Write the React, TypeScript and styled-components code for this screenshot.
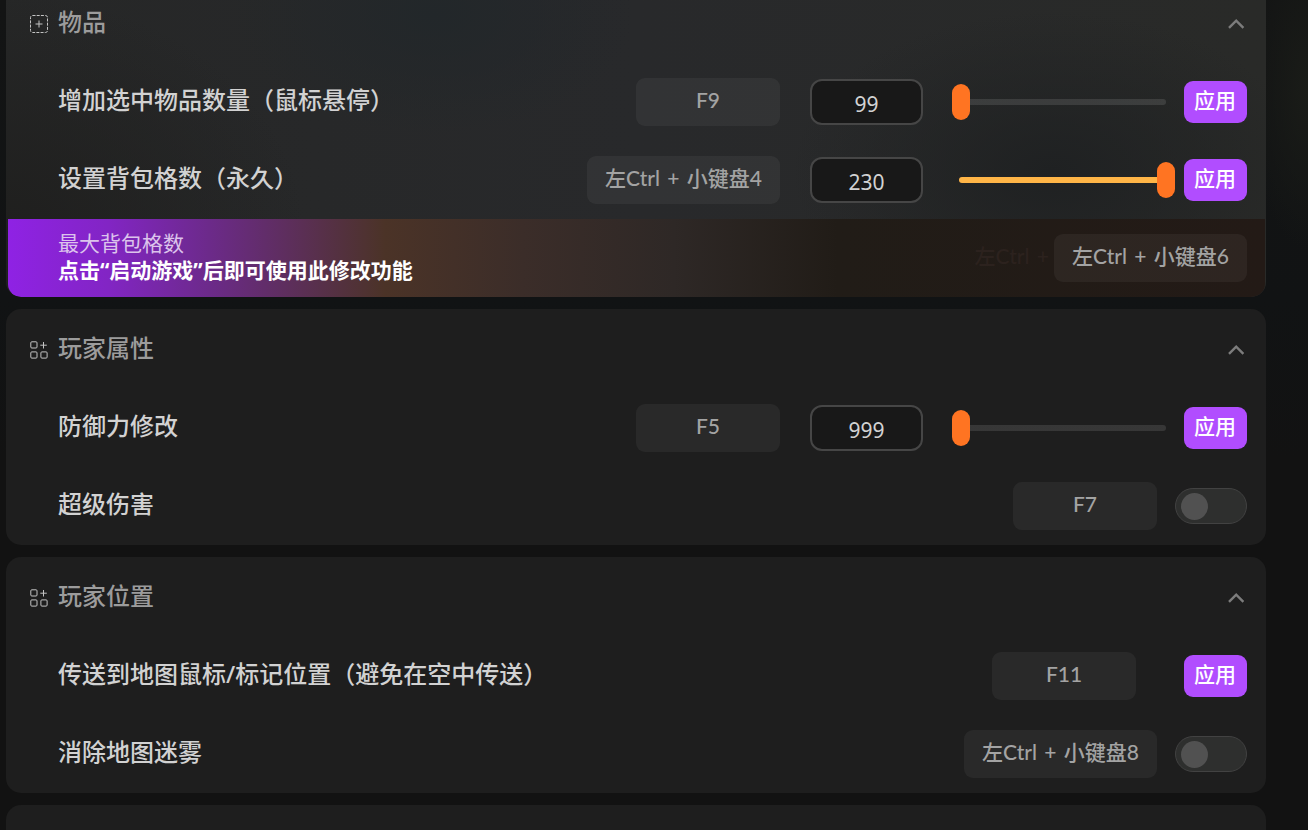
import React, { useId, useState } from 'react';
import styled, { createGlobalStyle } from 'styled-components';

const GlobalStyle = createGlobalStyle`
  *, *::before, *::after { box-sizing: border-box; }
  body {
    margin: 0;
    background: #121212;
    font-family: 'Noto Sans', 'Noto Sans CJK SC', sans-serif;
    color: #d2d2d2;
  }
  button, input { font: inherit; color: inherit; }
`;

const Page = styled.main`
  height: 100vh;
  overflow: hidden;
  padding: 0 42px 0 6px;
  background:
    radial-gradient(ellipse 60px 160px at 100% 90px, #1a1c18 0%, transparent 100%),
    linear-gradient(180deg, #131414 0, #111314 300px, #121212 460px);
`;

const List = styled.div`
  display: flex;
  flex-direction: column;
  gap: 12px;
  margin-top: -17px;
`;

const Card = styled.section<{ $lit?: boolean }>`
  flex: none;
  border-radius: 15px;
  overflow: hidden;
  background: ${({ $lit }) =>
    $lit
      ? `radial-gradient(ellipse 260px 160px at 83% 60%, #1f2122 0%, transparent 100%),
         radial-gradient(ellipse 300px 240px at 0% 80%, #1f1f1e 0%, transparent 100%),
         radial-gradient(ellipse 200px 120px at 34% 10%, #22272a 0%, transparent 100%),
         linear-gradient(90deg, #262727 0%, #28292b 50%, #292a28 100%)`
      : '#1e1e1e'};
`;

const Header = styled.header`
  display: flex;
  align-items: center;
  gap: 10px;
  height: 80px;
  padding: 1px 21px 0 24px;
`;

const HeaderIcon = styled.svg`
  flex: none;
  width: 18px;
  height: 18px;
  fill: none;
  stroke: #c4c4c4;
`;

const Title = styled.h2`
  flex: 1;
  margin: 0 0 3px;
  font-size: 24px;
  line-height: 36px;
  font-weight: 500;
  color: #9c9c9c;
`;

const Collapse = styled.button`
  display: flex;
  padding: 0;
  border: 0;
  background: none;
  color: #7c7c7c;
  cursor: pointer;
`;

const Row = styled.div`
  display: flex;
  align-items: center;
  height: 78px;
  padding: 0 19px 0 52px;
`;

const Label = styled.label`
  flex: 1;
  margin-bottom: 4px;
  font-size: 24px;
  line-height: 36px;
  font-weight: 500;
`;

const Controls = styled.div<{ $gap: number }>`
  display: flex;
  align-items: center;
  gap: ${({ $gap }) => $gap}px;
`;

const HotkeyButton = styled.button`
  min-width: 144px;
  height: 48px;
  padding: 0 18px 4px;
  border: 0;
  border-radius: 9px;
  background: rgba(255, 255, 255, 0.05);
  font-family: Lato, 'Noto Sans CJK SC', sans-serif;
  font-size: 21px;
  line-height: 30px;
  font-weight: 500;
  color: #a3a3a3;
  white-space: nowrap;
  cursor: pointer;
`;

const Plus = styled.span`
  margin: 0 2px;
`;

const ValueGroup = styled.div`
  display: flex;
  align-items: center;
  gap: 27px;
  margin-right: 9px;
`;

const NumberBox = styled.input`
  width: 113px;
  height: 46px;
  padding: 3px 0 0;
  border: 2px solid #464646;
  border-radius: 12px;
  outline: 0;
  background: #181818;
  font-size: 21px;
  text-align: center;
`;

const Slider = styled.div`
  display: grid;
  align-items: center;
  width: 225px;

  &::before {
    content: '';
    grid-area: 1 / 1;
    height: 6px;
    margin: 0 9px;
    border-radius: 3px;
    background: linear-gradient(90deg, #ffb547 var(--fill), rgba(255, 255, 255, 0.11) var(--fill));
  }
`;

const Range = styled.input`
  grid-area: 1 / 1;
  appearance: none;
  width: 100%;
  height: 36px;
  margin: 0;
  background: transparent;
  cursor: pointer;

  &::-webkit-slider-thumb {
    appearance: none;
    width: 18px;
    height: 36px;
    border-radius: 9px;
    background: #ff7422;
  }
`;

const Apply = styled.button`
  width: 63px;
  height: 42px;
  padding: 0 1px 5px 0;
  border: 0;
  border-radius: 9px;
  background: #b14dff;
  font-size: 21px;
  line-height: 30px;
  font-weight: 500;
  color: #fff;
  cursor: pointer;
`;

const Switch = styled.input`
  appearance: none;
  display: flex;
  align-items: center;
  width: 72px;
  height: 36px;
  margin: 0;
  padding: 0 5px;
  border: 1px solid #424242;
  border-radius: 18px;
  background: #2e2f2e;
  cursor: pointer;

  &::before {
    content: '';
    width: 27px;
    height: 27px;
    border-radius: 50%;
    background: #515151;
  }

  &:checked {
    justify-content: flex-end;
    background: #b14dff;
  }
`;

const Banner = styled(Row)`
  margin: 0 1px 0 2px;
  padding: 0 18px 0 50px;
  border-radius: 0 0 13px 13px;
  background: linear-gradient(
    90deg,
    #8f22e4 0%,
    #8225c4 8%,
    #6c2a8a 16%,
    #573049 25%,
    #4b3327 30%,
    #3b2d29 41%,
    #2e2826 53%,
    #211c17 66%,
    #231a16 100%
  );
`;

const BannerText = styled.div`
  flex: 1;
  margin-bottom: 3px;
  font-size: 21px;
  line-height: 27px;
`;

const BannerName = styled.p`
  margin: 0;
  color: #dcc3ec;
`;

const BannerHint = styled.p`
  margin: 0;
  font-weight: 700;
  color: #fff;
`;

const FadedHotkey = styled.span`
  margin-right: 3px;
  padding-bottom: 4px;
  font-family: Lato, 'Noto Sans CJK SC', sans-serif;
  font-size: 21px;
  line-height: 30px;
  font-weight: 500;
  color: #2c221e;
`;

function AddFrameIcon() {
  return (
    <HeaderIcon viewBox="0 0 18 18" aria-hidden="true">
      <rect x="0.5" y="0.5" width="17" height="17" rx="2" strokeDasharray="3 1.2" />
      <path d="M9 5.5v7M5.5 9h7" />
    </HeaderIcon>
  );
}

function GridPlusIcon() {
  return (
    <HeaderIcon viewBox="0 0 18 18" aria-hidden="true">
      <rect x="0.8" y="0.8" width="6.2" height="6.2" rx="1" />
      <rect x="0.8" y="10.9" width="6.2" height="6.2" rx="1" />
      <rect x="10.9" y="10.9" width="6.2" height="6.2" rx="1" />
      <path d="M13.5 1v6.5M10.3 4.2h6.5" />
    </HeaderIcon>
  );
}

function CardHeader({ title, icon }: { title: string; icon: React.ReactNode }) {
  return (
    <Header>
      {icon}
      <Title>{title}</Title>
      <Collapse type="button" aria-label={`收起${title}`}>
        <svg width="18" height="12" viewBox="0 0 18 12" fill="none" stroke="currentColor" strokeWidth="2.4">
          <path d="M2 9.8 9.2 2.6l7.2 7.2" />
        </svg>
      </Collapse>
    </Header>
  );
}

function Hotkey({ keys }: { keys: string[] }) {
  return (
    <HotkeyButton type="button">
      {keys.map((key, i) => (
        <React.Fragment key={key}>
          {i > 0 && <> <Plus>+</Plus> </>}
          {key}
        </React.Fragment>
      ))}
    </HotkeyButton>
  );
}

function ValueRow({ label, keys, initial, max }: { label: string; keys: string[]; initial: number; max: number }) {
  const id = useId();
  const [value, setValue] = useState(initial);
  const fill = { '--fill': `${(value / max) * 100}%` } as React.CSSProperties;
  return (
    <Row>
      <Label htmlFor={id}>{label}</Label>
      <Controls $gap={30}>
        <Hotkey keys={keys} />
        <ValueGroup>
          <NumberBox id={id} inputMode="numeric" value={value} onChange={(e) => setValue(Number(e.target.value) || 0)} />
          <Slider style={fill}>
            <Range
              type="range"
              aria-label={label}
              min={0}
              max={max}
              value={value}
              onChange={(e) => setValue(Number(e.target.value))}
            />
          </Slider>
        </ValueGroup>
      </Controls>
      <Apply type="button">应用</Apply>
    </Row>
  );
}

function ToggleRow({ label, keys }: { label: string; keys: string[] }) {
  const id = useId();
  return (
    <Row>
      <Label htmlFor={id}>{label}</Label>
      <Controls $gap={18}>
        <Hotkey keys={keys} />
        <Switch id={id} type="checkbox" role="switch" />
      </Controls>
    </Row>
  );
}

function ActionRow({ label, keys }: { label: string; keys: string[] }) {
  const id = useId();
  return (
    <Row>
      <Label htmlFor={id}>{label}</Label>
      <Controls $gap={48}>
        <Hotkey keys={keys} />
        <Apply id={id} type="button">应用</Apply>
      </Controls>
    </Row>
  );
}

export default function App() {
  return (
    <Page lang="zh-CN">
      <GlobalStyle />
      <List>
        <Card $lit>
          <CardHeader title="物品" icon={<AddFrameIcon />} />
          <ValueRow label="增加选中物品数量（鼠标悬停）" keys={['F9']} initial={99} max={9999} />
          <ValueRow label="设置背包格数（永久）" keys={['左Ctrl', '小键盘4']} initial={230} max={230} />
          <Banner>
            <BannerText>
              <BannerName>最大背包格数</BannerName>
              <BannerHint>点击“启动游戏”后即可使用此修改功能</BannerHint>
            </BannerText>
            <FadedHotkey aria-hidden="true">
              左Ctrl <Plus>+</Plus>
            </FadedHotkey>
            <Hotkey keys={['左Ctrl', '小键盘6']} />
          </Banner>
        </Card>
        <Card>
          <CardHeader title="玩家属性" icon={<GridPlusIcon />} />
          <ValueRow label="防御力修改" keys={['F5']} initial={999} max={99999} />
          <ToggleRow label="超级伤害" keys={['F7']} />
        </Card>
        <Card>
          <CardHeader title="玩家位置" icon={<GridPlusIcon />} />
          <ActionRow label="传送到地图鼠标/标记位置（避免在空中传送）" keys={['F11']} />
          <ToggleRow label="消除地图迷雾" keys={['左Ctrl', '小键盘8']} />
        </Card>
        <Card>
          <Header />
        </Card>
      </List>
    </Page>
  );
}
